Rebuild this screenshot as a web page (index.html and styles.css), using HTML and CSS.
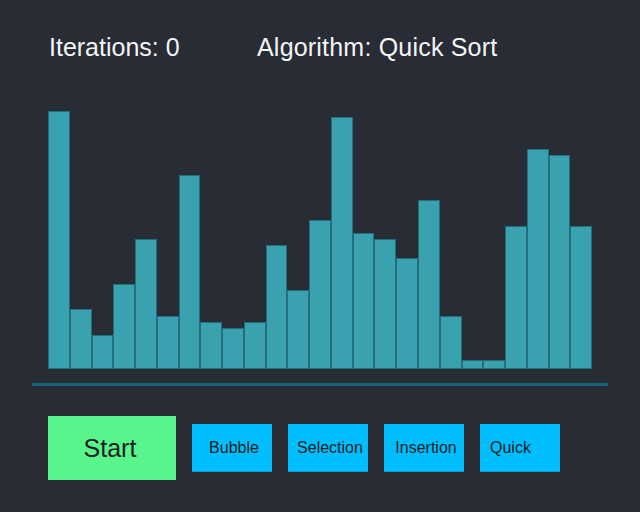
FILE: index.html
```html
<!DOCTYPE html>
<html>
<head>
<meta charset="utf-8">
<link rel="stylesheet" href="styles.css">
</head>
<body>
<div class="page">
  <div class="header">
    <span class="iter">Iterations: 0</span>
    <span class="algo">Algorithm: Quick Sort</span>
  </div>
  <div class="chart">
    <div class="bar" style="height:258px"></div>
    <div class="bar" style="height:60px"></div>
    <div class="bar" style="height:34px"></div>
    <div class="bar" style="height:85px"></div>
    <div class="bar" style="height:130px"></div>
    <div class="bar" style="height:53px"></div>
    <div class="bar" style="height:194px"></div>
    <div class="bar" style="height:47px"></div>
    <div class="bar" style="height:41px"></div>
    <div class="bar" style="height:47px"></div>
    <div class="bar" style="height:124px"></div>
    <div class="bar" style="height:79px"></div>
    <div class="bar" style="height:149px"></div>
    <div class="bar" style="height:252px"></div>
    <div class="bar" style="height:136px"></div>
    <div class="bar" style="height:130px"></div>
    <div class="bar" style="height:111px"></div>
    <div class="bar" style="height:169px"></div>
    <div class="bar" style="height:53px"></div>
    <div class="bar" style="height:9px"></div>
    <div class="bar" style="height:9px"></div>
    <div class="bar" style="height:143px"></div>
    <div class="bar" style="height:220px"></div>
    <div class="bar" style="height:214px"></div>
    <div class="bar" style="height:143px"></div>
  </div>
  <div class="baseline"></div>
  <div class="controls">
    <button class="btn start">Start</button>
    <button class="btn algo-btn bubble">Bubble</button>
    <button class="btn algo-btn selection">Selection</button>
    <button class="btn algo-btn insertion">Insertion</button>
    <button class="btn algo-btn quick">Quick</button>
  </div>
</div>
</body>
</html>
```
FILE: styles.css
```css
html, body {
  margin: 0;
  padding: 0;
  background: #282c35;
  width: 640px;
  height: 512px;
  overflow: hidden;
}
.page {
  padding: 32px 32px 0;
  font-family: "Liberation Sans", Arial, sans-serif;
}
.header {
  display: flex;
  padding-left: 17px;
  height: 30px;
  line-height: 30px;
  font-size: 25px;
  color: #f4f4f4;
}
.iter {
  width: 208px;
}
.algo {
  letter-spacing: 0.2px;
}
.chart {
  display: flex;
  align-items: flex-end;
  height: 307px;
  margin: 0 16px;
}
.bar {
  flex: 1;
  box-sizing: border-box;
  background: #3aa1b1;
  border: 1px solid #226f7b;
}
.baseline {
  margin-top: 14px;
  height: 3px;
  background: #10677a;
}
.controls {
  display: flex;
  align-items: center;
  gap: 16px;
  margin-top: 30px;
  padding-left: 16px;
}
.btn {
  border: none;
  margin: 0;
  padding: 0;
  font-family: "Liberation Sans", Arial, sans-serif;
  color: #1b1f24;
  box-sizing: border-box;
}
.start {
  width: 128px;
  height: 64px;
  background: #58f48c;
  font-size: 25px;
  padding-right: 4px;
}
.algo-btn {
  width: 80px;
  height: 48px;
  background: #00bdfd;
  font-size: 16px;
  border-bottom: 1px solid #0a9fd2;
}
.bubble {
  padding-left: 4px;
}
.selection,
.insertion {
  padding-left: 4px;
}
.quick {
  text-align: left;
  padding-left: 10px;
}
```
